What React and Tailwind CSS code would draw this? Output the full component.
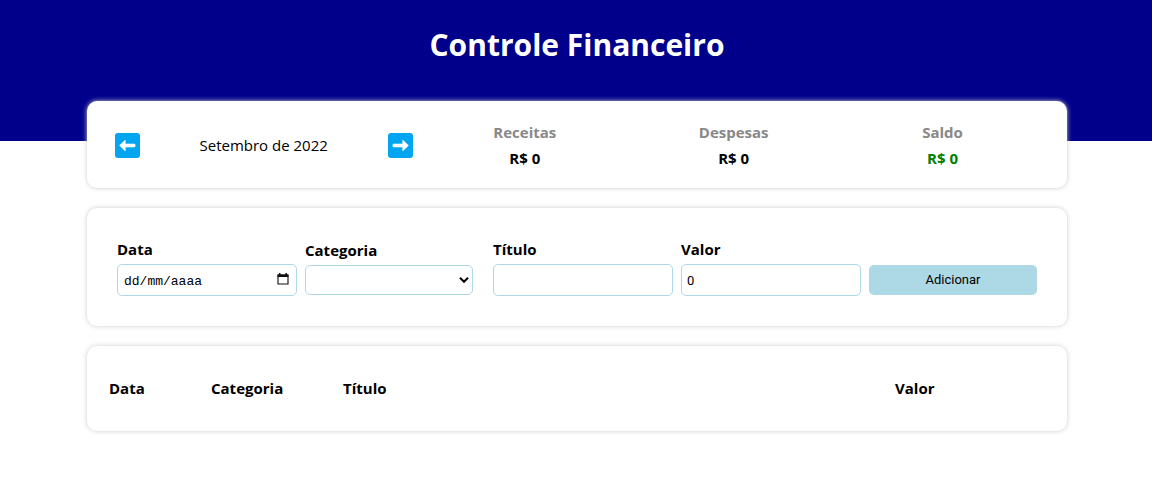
import { useId } from "react";

const card = "rounded-[10px] bg-white px-5 shadow-[0_0_5px_#cccccc]";
const textInput =
  "box-content block h-5 w-full rounded-[5px] border border-[#add8e6] bg-white p-[5px] font-['Roboto',sans-serif] text-[13px] text-black";

function ArrowButton({ label, flip }) {
  return (
    <button type="button" aria-label={label} className="flex w-10 cursor-pointer justify-center">
      <svg viewBox="0 0 25 25" className="size-[25px]" aria-hidden="true">
        <rect width="25" height="25" rx="3" fill="#03a5f0" />
        <path
          transform={flip ? "translate(25 0) scale(-1 1)" : undefined}
          d="M4.6 12.5 10.2 7.2V11.1H19.3Q20.2 11.1 20.2 12.5T19.3 13.9H10.2V17.8Z"
          fill="#ffffff"
          stroke="#ffffff"
          strokeWidth="0.7"
          strokeLinejoin="round"
        />
      </svg>
    </button>
  );
}

function Summary({ title, value, color }) {
  return (
    <div className="flex-[2] text-center font-bold leading-[21px]">
      <div className="mb-[5px] text-[#888888]">{title}</div>
      <div className={color}>{value}</div>
    </div>
  );
}

function Field({ label, children }) {
  const id = useId();
  return (
    <div className="m-[10px] min-w-0 flex-1">
      <label htmlFor={id} className="mb-1 block font-bold leading-[22px]">
        {label}
      </label>
      {children(id)}
    </div>
  );
}

export default function App() {
  return (
    <div className="pb-5 pl-0.5 font-['Open_Sans','Noto_Sans',sans-serif] text-[15px] text-black">
      <header className="-ml-0.5 h-[141px] bg-[#00008b] pl-0.5 pt-6 text-center">
        <h1 className="text-[30px] font-bold leading-[42px] text-white">Controle Financeiro</h1>
      </header>
      <main className="mx-auto -mt-10 mb-10 flex max-w-[980px] flex-col gap-5">
        <section className={`${card} flex items-center pb-[19px] pt-[21px]`}>
          <div className="flex flex-[3] items-center">
            <ArrowButton label="Mês anterior" />
            <div className="flex-1 text-center">Setembro de 2022</div>
            <ArrowButton label="Próximo mês" flip />
          </div>
          <Summary title="Receitas" value="R$ 0" color="text-black" />
          <Summary title="Despesas" value="R$ 0" color="text-black" />
          <Summary title="Saldo" value="R$ 0" color="text-[#008000]" />
        </section>

        <form className={`${card} flex items-center py-5`} onSubmit={(e) => e.preventDefault()}>
          <Field label="Data">
            {(id) => (
              <div className="relative w-[calc(100%+12px)]">
                <input
                  id={id}
                  type="text"
                  placeholder="dd/mm/aaaa"
                  className="block h-8 w-full rounded-[5px] border border-[#add8e6] bg-white px-1.5 pt-0.5 font-['Liberation_Mono',monospace] text-[13px] text-black placeholder:text-black"
                />
                <button type="button" aria-label="Abrir calendário" className="absolute right-2 top-[9px] size-3">
                  <svg viewBox="0 0 12 12" className="size-3" aria-hidden="true">
                    <path d="M1 2.5h10v8.5H1Z" fill="none" stroke="#101010" strokeWidth="1.1" />
                    <path d="M.5 1.2H11.5V4H.5ZM2 0h1.5v2H2ZM8.5 0H10v2H8.5Z" fill="#101010" />
                  </svg>
                </button>
              </div>
            )}
          </Field>
          <Field label="Categoria">
            {(id) => (
              <div className="relative">
                <select
                  id={id}
                  className="block h-[30px] w-full appearance-none rounded-[5px] border border-[#add8e6] bg-white px-[5px] text-[13px]"
                >
                  <option value=""></option>
                </select>
                <svg
                  viewBox="0 0 10 6"
                  className="pointer-events-none absolute right-1 top-3 h-1.5 w-2.5"
                  aria-hidden="true"
                >
                  <path d="M1 .8 5 4.8 9 .8" fill="none" stroke="#000000" strokeWidth="2" />
                </svg>
              </div>
            )}
          </Field>
          <Field label="Título">{(id) => <input id={id} type="text" className={textInput} />}</Field>
          <Field label="Valor">
            {(id) => <input id={id} type="number" defaultValue="0" className={textInput} />}
          </Field>
          <div className="m-[10px] min-w-0 flex-1 pt-[26px]">
            <button
              type="submit"
              className="block h-[30px] w-full cursor-pointer rounded-[5px] bg-[#add8e6] font-['Roboto',sans-serif] text-[13px] text-black"
            >
              Adicionar
            </button>
          </div>
        </form>

        <section className={`${card} py-5`}>
          <table className="w-full border-separate border-spacing-[2px] text-left leading-[21px]">
            <thead>
              <tr>
                <th className="w-[100px] py-[10px] font-bold">Data</th>
                <th className="w-[130px] py-[10px] font-bold">Categoria</th>
                <th className="py-[10px] font-bold">Título</th>
                <th className="w-[150px] py-[10px] font-bold">Valor</th>
              </tr>
            </thead>
            <tbody></tbody>
          </table>
        </section>
      </main>
    </div>
  );
}
